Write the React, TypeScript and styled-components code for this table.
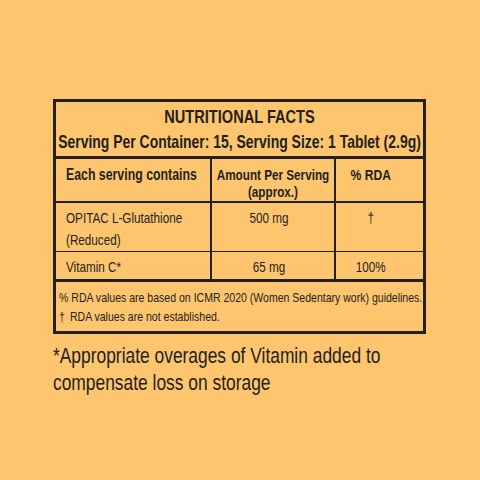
import React from 'react'
import styled, { createGlobalStyle } from 'styled-components'

// no narrow face is installed, so text is squeezed to the label's condensed width
const NARROW = 0.78

const GlobalStyle = createGlobalStyle`
  html, body {
    margin: 0;
    padding: 0;
    background: #fec56f;
    overflow: hidden;
  }
  body {
    font-family: "Liberation Sans", Arial, sans-serif;
    color: #231f20;
  }
`

const Page = styled.div`
  width: 480px;
  height: 480px;
  box-sizing: border-box;
  padding: 99px 0 0 53px;
`

const Squeeze = styled.div`
  width: ${100 / NARROW}%;
  transform: scaleX(${NARROW});
  transform-origin: 0 0;
`

const FactsTable = styled.table`
  width: 373px;
  border-collapse: collapse;
  border: 3px solid #231f20;
  table-layout: fixed;
`

const TitleCell = styled.td`
  height: 57px;
  padding: 4px 0 0;
  text-align: center;
  vertical-align: top;
  border-bottom: 3px solid #231f20;
  box-sizing: border-box;
`

const Title = styled.div`
  font-size: 18.7px;
  font-weight: 700;
  line-height: 22px;
`

const Serving = styled.div`
  margin-top: 3px;
  font-size: 17.9px;
  font-weight: 700;
  line-height: 22px;
  white-space: nowrap;
`

const HeadCell = styled.th<{ $align?: string; $pad?: string; $size?: number }>`
  height: 44px;
  padding: ${({ $pad }) => $pad || '7px 0 0 10px'};
  font-size: ${({ $size }) => $size || 15}px;
  font-weight: 700;
  line-height: 17px;
  text-align: ${({ $align }) => $align || 'left'};
  vertical-align: top;
  white-space: nowrap;
  border-right: 2px solid #231f20;
  border-bottom: 2px solid #231f20;
  box-sizing: border-box;

  &:last-child {
    border-right: none;
  }
`

const BodyCell = styled.td<{ $align?: string; $h: number; $pad?: string; $thick?: boolean }>`
  height: ${({ $h }) => $h}px;
  padding: ${({ $pad }) => $pad || '4px 0 0 10px'};
  font-size: 15px;
  line-height: 22px;
  text-align: ${({ $align }) => $align || 'left'};
  vertical-align: top;
  white-space: nowrap;
  border-right: 2px solid #231f20;
  border-bottom: ${({ $thick }) => ($thick ? '3px' : '1px')} solid #231f20;
  box-sizing: border-box;

  &:last-child {
    border-right: none;
  }
`

const NoteCell = styled.td`
  height: 52px;
  padding: 6px 0 0 3px;
  font-size: 13.5px;
  line-height: 19px;
  vertical-align: top;
  white-space: nowrap;
  box-sizing: border-box;
`

const Dagger = styled.span`
  display: inline-block;
  width: 14px;
`

const Overage = styled.div`
  margin-top: 8px;
  width: 380px;
  font-size: 22.3px;
  line-height: 27px;
  white-space: nowrap;
`

const rows = [
  { name: ['OPITAC L-Glutathione', '(Reduced)'], amount: '500 mg', rda: '†', h: 45 },
  { name: ['Vitamin C*'], amount: '65 mg', rda: '100%', h: 29 },
]

export default function App() {
  return (
    <>
      <GlobalStyle />
      <Page>
        <FactsTable>
          <colgroup>
            <col style={{ width: 156 }} />
            <col style={{ width: 124 }} />
            <col />
          </colgroup>
          <tbody>
            <tr>
              <TitleCell colSpan={3}>
                <Squeeze>
                  <Title>NUTRITIONAL FACTS</Title>
                  <Serving>Serving Per Container: 15, Serving Size: 1 Tablet (2.9g)</Serving>
                </Squeeze>
              </TitleCell>
            </tr>
            <tr>
              <HeadCell $size={15.8}>
                <Squeeze>Each serving contains</Squeeze>
              </HeadCell>
              <HeadCell $align="center" $pad="7px 0 0">
                <Squeeze>
                  Amount Per Serving
                  <br />
                  (approx.)
                </Squeeze>
              </HeadCell>
              <HeadCell $align="center" $pad="7px 18px 0 0" $size={15.5}>
                <Squeeze>% RDA</Squeeze>
              </HeadCell>
            </tr>
            {rows.map((row, i) => {
              const last = i === rows.length - 1
              return (
                <tr key={row.amount}>
                  <BodyCell $h={row.h} $thick={last}>
                    <Squeeze>
                      {row.name.map((line) => (
                        <div key={line}>{line}</div>
                      ))}
                    </Squeeze>
                  </BodyCell>
                  <BodyCell $h={row.h} $thick={last} $align="center" $pad="4px 8px 0 0">
                    <Squeeze>{row.amount}</Squeeze>
                  </BodyCell>
                  <BodyCell $h={row.h} $thick={last} $align="center" $pad="4px 18px 0 0">
                    <Squeeze>{row.rda}</Squeeze>
                  </BodyCell>
                </tr>
              )
            })}
            <tr>
              <NoteCell colSpan={3}>
                <Squeeze>
                  <div>% RDA values are based on ICMR 2020 (Women Sedentary work) guidelines.</div>
                  <div>
                    <Dagger>†</Dagger>RDA values are not established.
                  </div>
                </Squeeze>
              </NoteCell>
            </tr>
          </tbody>
        </FactsTable>
        <Overage>
          <Squeeze>
            *Appropriate overages of Vitamin added to
            <br />
            compensate loss on storage
          </Squeeze>
        </Overage>
      </Page>
    </>
  )
}
